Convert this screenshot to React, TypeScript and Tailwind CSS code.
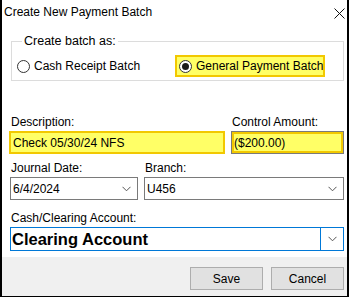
import React from "react";

const font = { fontFamily: '"Liberation Sans", Arial, sans-serif' };

function Chevron() {
  return (
    <svg width="9" height="6" viewBox="0 0 9 6" className="shrink-0">
      <path d="M0.5 0.8 L4.5 4.8 L8.5 0.8" fill="none" stroke="#555" strokeWidth="1" />
    </svg>
  );
}

function Radio({ checked }: { checked?: boolean }) {
  return (
    <span className="w-[13px] h-[13px] rounded-full border border-[#333] bg-white flex items-center justify-center shrink-0">
      {checked && <span className="w-[7px] h-[7px] rounded-full bg-[#1a1a1a]" />}
    </span>
  );
}

export default function App() {
  return (
    <div
      className="w-[349px] h-[297px] bg-white border-l-2 border-r-2 border-b border-black flex flex-col text-[12px] leading-[16px] text-black"
      style={font}
    >
      <div className="h-[33px] flex justify-between items-start pl-[2px] pr-[2px] pt-[4px]">
        <span className="text-[12px]">Create New Payment Batch</span>
        <svg width="11" height="11" viewBox="0 0 11 11" className="mt-[4px]">
          <path d="M0.5 0.5 L10.5 10.5 M10.5 0.5 L0.5 10.5" stroke="#111" strokeWidth="1" />
        </svg>
      </div>

      <fieldset className="ml-[9px] mr-[3px] border border-[#dcdcdc] pl-[5px] pt-[6px] pb-[3px]">
        <legend className="ml-[5px] px-[2px] text-[12.5px]">Create batch as:</legend>
        <div className="flex items-center h-[22px]">
          <label className="flex items-center gap-[4px] w-[158px] whitespace-nowrap">
            <Radio />
            <span>Cash Receipt Batch</span>
          </label>
          <label className="flex items-center gap-[4px] h-[22px] w-[150px] pl-[2px] bg-[#ffff66] border-2 border-[#f2c800] whitespace-nowrap overflow-hidden">
            <Radio checked />
            <span>General Payment Batch</span>
          </label>
        </div>
      </fieldset>

      <div className="flex pl-[7px] pr-[3px] gap-[6px] mt-[33px]">
        <div className="flex flex-col w-[216px]">
          <span className="pl-[2px] mb-[1px]">Description:</span>
          <div className="h-[23px] bg-[#ffff66] border-2 border-[#f2c800] pl-[2px] flex items-center">
            Check 05/30/24 NFS
          </div>
        </div>
        <div className="flex flex-col flex-1">
          <span className="pl-[1px] mb-[1px]">Control Amount:</span>
          <div className="h-[23px] bg-[#ffff66] border border-[#7a7a7a] shadow-[inset_0_0_0_2px_#f2c800] pl-[2px] flex items-center">
            ($200.00)
          </div>
        </div>
      </div>

      <div className="flex pl-[8px] pr-[3px] gap-[6px] mt-[6px]">
        <div className="flex flex-col w-[128px]">
          <span className="pl-[1px] mb-[1px]">Journal Date:</span>
          <div className="h-[23px] border border-[#7a7a7a] bg-white pl-[2px] pr-[6px] flex items-center justify-between">
            <span>6/4/2024</span>
            <Chevron />
          </div>
        </div>
        <div className="flex flex-col flex-1">
          <span className="pl-[1px] mb-[1px]">Branch:</span>
          <div className="h-[23px] border border-[#7a7a7a] bg-white pl-[2px] pr-[6px] flex items-center justify-between">
            <span>U456</span>
            <Chevron />
          </div>
        </div>
      </div>

      <div className="flex flex-col pl-[8px] pr-[3px] mt-[10px]">
        <span className="pl-[1px] mb-[1px]">Cash/Clearing Account:</span>
        <div className="h-[24px] border border-[#0078d7] bg-white flex items-stretch">
          <div className="flex-1 flex items-center pl-[1px] text-[16.5px] font-bold leading-[20px]">
            Clearing Account
          </div>
          <div className="w-[23px] border-l border-[#0078d7] flex items-center justify-center">
            <Chevron />
          </div>
        </div>
      </div>

      <div className="mt-[6px] flex-1 bg-[#f0f0f0] flex justify-end items-start gap-[8px] pr-[3px] pt-[10px]">
        <button className="w-[73px] h-[23px] bg-[#e1e1e1] border border-[#adadad] text-[12px] leading-[16px]" style={font}>
          Save
        </button>
        <button className="w-[73px] h-[23px] bg-[#e1e1e1] border border-[#adadad] text-[12px] leading-[16px]" style={font}>
          Cancel
        </button>
      </div>
    </div>
  );
}
